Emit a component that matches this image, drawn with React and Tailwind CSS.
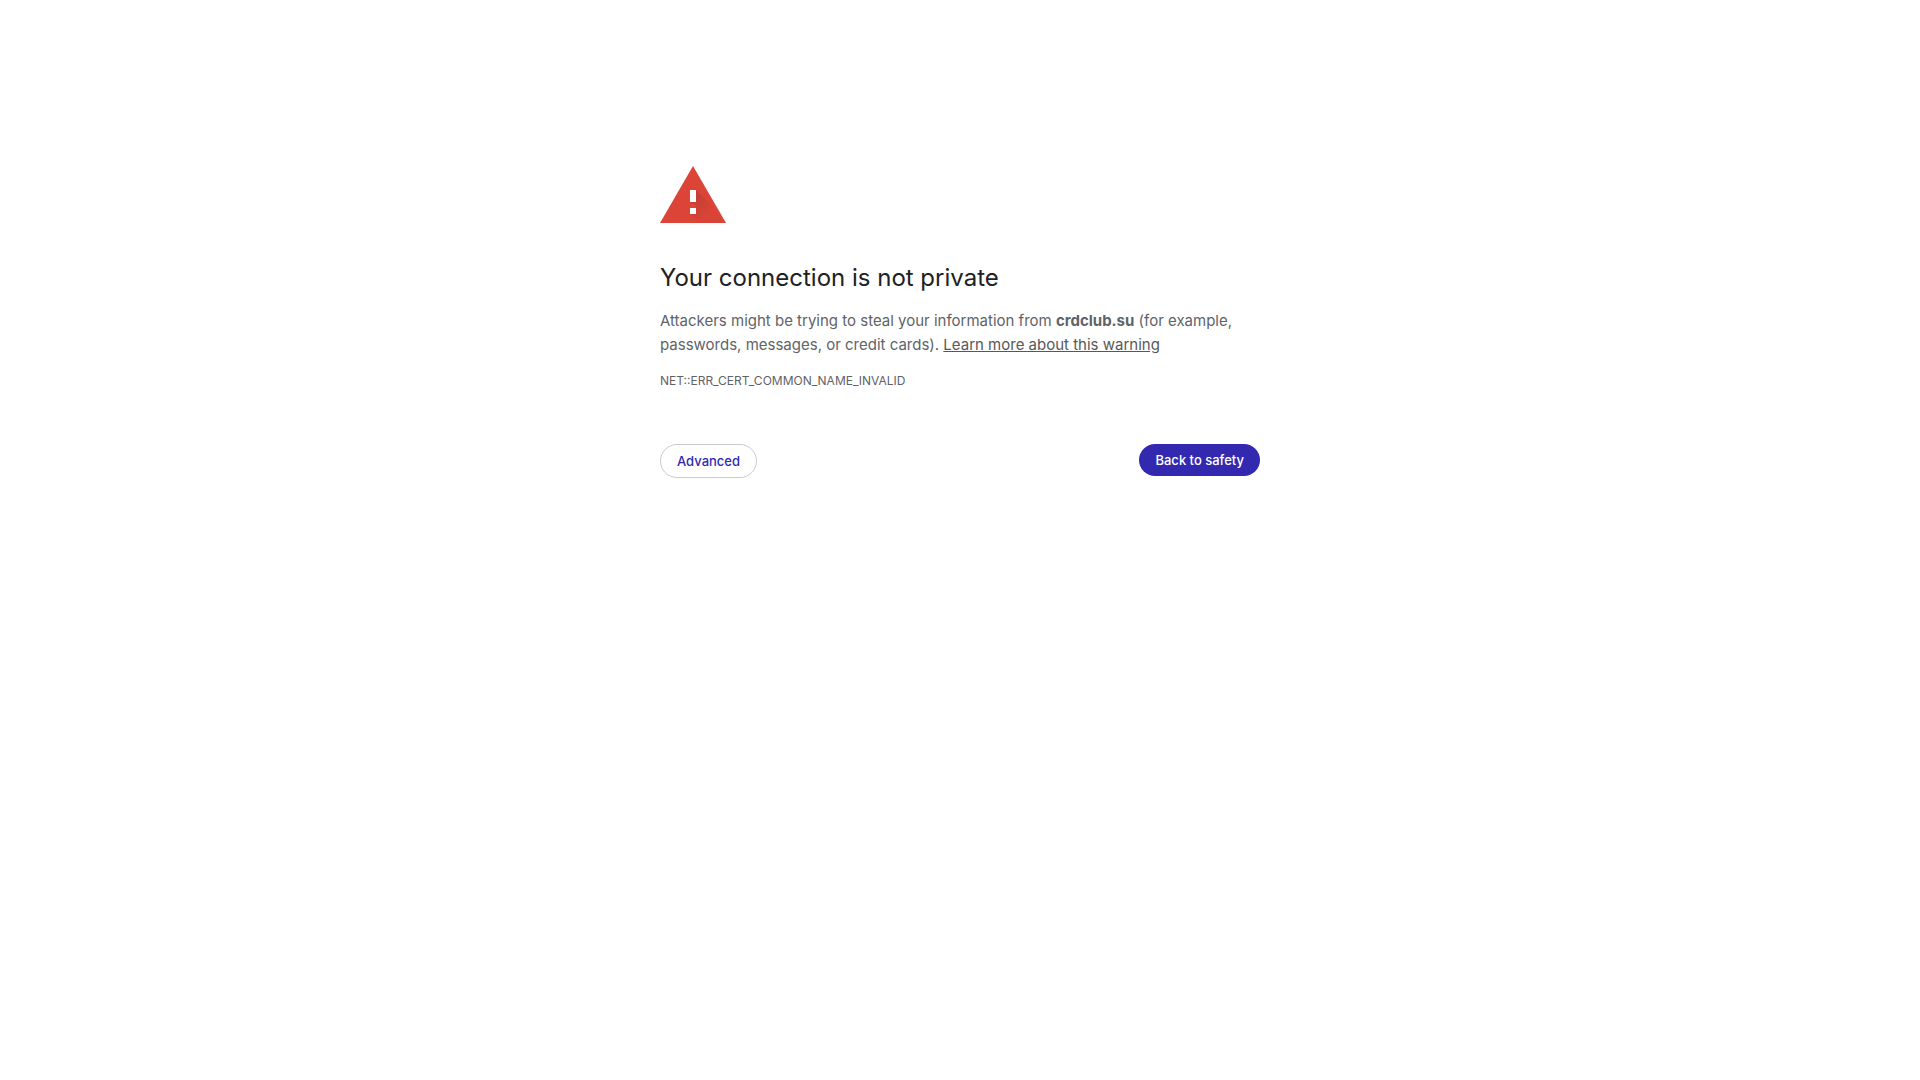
import React from 'react';

const pill = 'rounded-full px-4 py-2 text-[13px] leading-4 font-medium cursor-pointer';

function WarningIcon() {
  return (
    <svg viewBox="0 0 66 57" className="block w-[66px] h-[57px]" aria-hidden="true">
      <defs>
        <linearGradient id="mark-shadow" x1="30" y1="24" x2="50" y2="44" gradientUnits="userSpaceOnUse">
          <stop offset="0" stopColor="#3e2723" stopOpacity="0.22" />
          <stop offset="1" stopColor="#3e2723" stopOpacity="0.02" />
        </linearGradient>
      </defs>
      <path fill="#db4437" d="M0 57h66L33 0z" />
      {/* long shadow falling to the lower right of the mark */}
      <path fill="url(#mark-shadow)" d="M36 24l17 17 9 16H39l-9-9 6-6v-3l-6-3z" />
      <path fill="#fff" d="M30 42h6v6h-6zM30 24h6v12h-6z" />
    </svg>
  );
}

export default function App() {
  return (
    <main className="mx-auto max-w-[600px] pt-[166px] font-['Inter',sans-serif] text-[15px] leading-6 text-[#5f6368]">
      <WarningIcon />
      <h1 className="mt-10 text-2xl leading-[30px] font-normal text-[#202124]">
        Your connection is not private
      </h1>
      <p className="mt-4">
        Attackers might be trying to steal your information from{' '}
        <strong className="font-bold">crdclub.su</strong> (for example, passwords, messages, or
        credit cards).{' '}
        <a href="#learn-more" className="text-[#585858] underline">
          Learn more about this warning
        </a>
      </p>
      <p className="mt-3 text-xs leading-6">NET::ERR_CERT_COMMON_NAME_INVALID</p>
      <div className="mt-[51px] flex items-start justify-between">
        <button type="button" className={`${pill} border border-[#cacaca] text-[#3229b0]`}>
          Advanced
        </button>
        <button type="button" className={`${pill} bg-[#3229b0] text-white`}>
          Back to safety
        </button>
      </div>
    </main>
  );
}
